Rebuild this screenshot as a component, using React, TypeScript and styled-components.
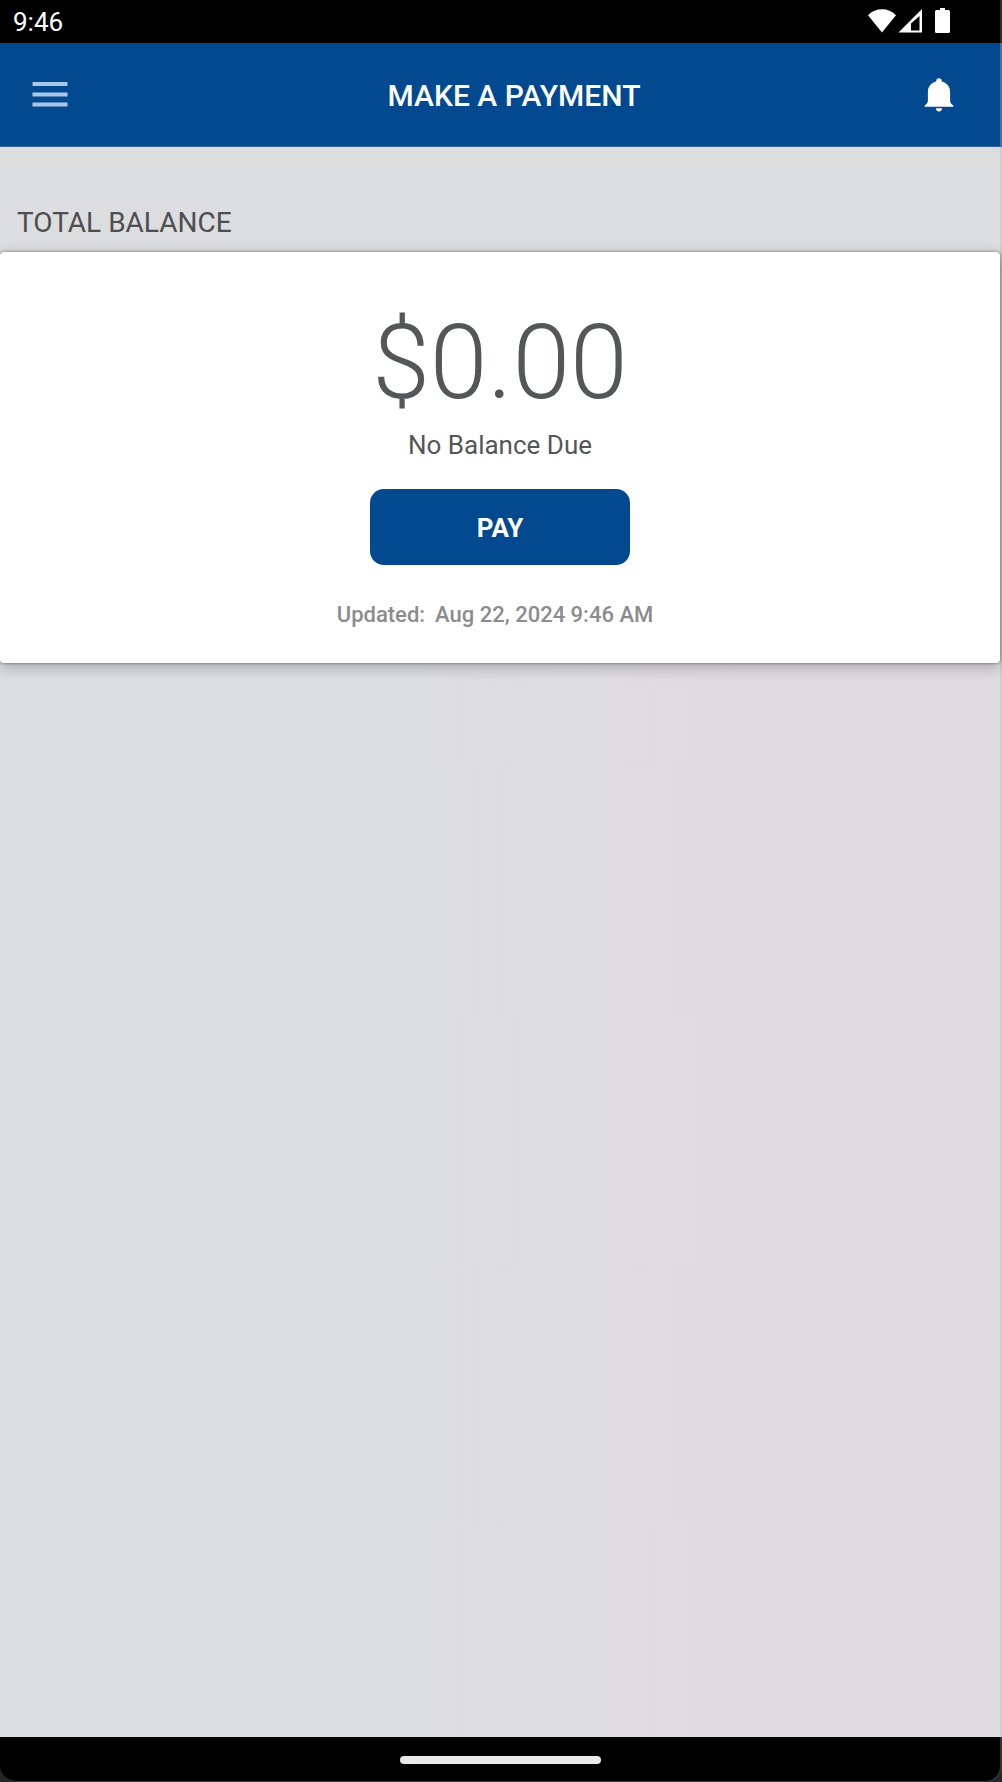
import React from 'react';
import styled, { createGlobalStyle } from 'styled-components';

const colors = {
  brand: '#024990',
  page: '#dcdddf',
  ink: '#555658',
  muted: '#8c8c8e',
};

const GlobalStyle = createGlobalStyle`
  * { box-sizing: border-box; }
  body {
    margin: 0;
    background: #26262a;
    font-family: Roboto, "Liberation Sans", sans-serif;
  }
`;

const Screen = styled.div`
  display: flex;
  flex-direction: column;
  min-height: 100vh;
`;

const StatusBar = styled.div`
  display: flex;
  align-items: center;
  justify-content: space-between;
  height: 43px;
  padding: 0 50px 0 13px;
  border-right: 2px solid #2c2c2e;
  background: #000;
  color: #fff;
  font-size: 26px;
  line-height: 32px;
`;

const StatusIcons = styled.div`
  display: flex;
  align-items: center;
  height: 43px;
  padding-bottom: 2px;
`;

const Header = styled.header`
  display: grid;
  grid-template-columns: 128px 1fr 100px;
  align-items: center;
  height: 104px;
  background: ${colors.brand};
  border-right: 2px solid #47719f;
  border-bottom: 1px solid #2f649d;
`;

const Title = styled.h1`
  margin: 0;
  padding-top: 2px;
  color: #fff;
  font-size: 30px;
  font-weight: 500;
  line-height: 40px;
  text-align: center;
`;

const IconButton = styled.button<{ $side: 'start' | 'end' }>`
  display: flex;
  align-items: center;
  justify-self: ${({ $side }) => $side};
  height: 72px;
  margin: 0;
  padding: 0 ${({ $side }) => ($side === 'start' ? 32 : 46)}px;
  border: 0;
  background: transparent;
  cursor: pointer;
`;

const Content = styled.main`
  display: flex;
  flex: 1;
  flex-direction: column;
  border-right: 2px solid #cfcfd0;
  background: linear-gradient(90deg, ${colors.page} 0%, ${colors.page} 40%, #dedbdf 75%, #dedbdf 100%);
`;

const SectionTitle = styled.h2`
  margin: 0;
  padding: 60px 17px 13px;
  background: #dcddde;
  color: #4d4e50;
  font-size: 28px;
  font-weight: 400;
  line-height: 32px;
`;

const Card = styled.section`
  display: flex;
  flex-direction: column;
  align-items: center;
  padding: 51px 16px 32px;
  border-radius: 4px;
  background: #fff;
  box-shadow: 0 0 3px rgba(0, 0, 0, 0.5), 0 4px 14px rgba(0, 0, 0, 0.25);
`;

const Amount = styled.div`
  color: ${colors.ink};
  font-size: 104px;
  font-weight: 300;
  line-height: 120px;
`;

const BalanceNote = styled.div`
  margin: 2px 0 24px;
  color: ${colors.ink};
  font-size: 26px;
  line-height: 40px;
`;

const PayButton = styled.button`
  width: 260px;
  height: 76px;
  padding: 2px 0 0;
  border: 0;
  border-radius: 14px;
  background: ${colors.brand};
  color: #fff;
  font-family: inherit;
  font-size: 26px;
  font-weight: 700;
  line-height: 32px;
  cursor: pointer;
`;

const Updated = styled.div`
  margin-top: 34px;
  color: ${colors.muted};
  font-size: 22px;
  font-weight: 500;
  line-height: 32px;
`;

const UpdatedPart = styled.span`
  display: inline-block;
  margin-right: 10px;
`;

const NavBar = styled.div`
  display: flex;
  justify-content: center;
  height: 45px;
  padding-top: 19px;
  border: solid #333336;
  border-width: 0 2px 1px 0;
  border-radius: 0 0 16px 16px;
  background: #000;
`;

const HomeHandle = styled.div`
  width: 201px;
  height: 8px;
  border-radius: 4px;
  background: #ebe9eb;
`;

const WifiIcon = () => (
  <svg width="28" height="24" viewBox="0 0 28 24" fill="#fff" aria-hidden="true">
    <path d="M14 23.500 0 6.200C4 2.300 8.700 .3 14 .3s10 2 14 5.900z" />
  </svg>
);

const SignalIcon = () => (
  <svg width="26" height="24" viewBox="0 0 26 24" fill="#fff" aria-hidden="true">
    <path fillRule="evenodd" d="M2.500 23.500 26 0v23.500zM15 21.500h8.500V7L15 14.500z" />
  </svg>
);

const BatteryIcon = () => (
  <svg width="28" height="25" viewBox="0 0 28 25" fill="#fff" aria-hidden="true">
    <path d="M18 0h5v2h3.500q1.500 0 1.500 1.500v20q0 1.500-1.500 1.500h-12q-1.500 0-1.500-1.500v-20q0-1.500 1.500-1.500H18z" />
  </svg>
);

const MenuIcon = () => (
  <svg width="36" height="28" viewBox="0 0 36 28" fill="#a9c8e8" aria-hidden="true">
    <path d="M.5 1h35v4H.5zM.5 11.500h35v4H.5zM.5 21.500h35v4H.5z" />
  </svg>
);

const BellIcon = () => (
  <svg width="30" height="34" viewBox="0 0 30 34" fill="#fff" aria-hidden="true">
    <path d="M15 .2c-1.600 0-2.800 1.100-2.800 2.700v.7C7 4.800 3.900 9 3.900 14v8.300c0 1.900-.6 3.200-2 4.300L.7 27.700v1h28.600v-1l-1.200-1.100c-1.400-1.100-2-2.400-2-4.300V14c0-5-3.100-9.200-8.300-10.400v-.7C17.800 1.300 16.600.2 15 .2z" />
    <path d="M11.900 30.200h6.200c0 1.900-1.300 3.300-3.100 3.300s-3.100-1.400-3.100-3.300z" />
  </svg>
);

export default function App() {
  return (
    <>
      <GlobalStyle />
      <Screen>
        <StatusBar>
          <span>9:46</span>
          <StatusIcons>
            <WifiIcon />
            <SignalIcon />
            <BatteryIcon />
          </StatusIcons>
        </StatusBar>
        <Header>
          <IconButton type="button" $side="start" aria-label="Menu">
            <MenuIcon />
          </IconButton>
          <Title>MAKE A PAYMENT</Title>
          <IconButton type="button" $side="end" aria-label="Notifications">
            <BellIcon />
          </IconButton>
        </Header>
        <Content>
          <SectionTitle>TOTAL BALANCE</SectionTitle>
          <Card>
            <Amount>$0.00</Amount>
            <BalanceNote>No Balance Due</BalanceNote>
            <PayButton type="button">PAY</PayButton>
            <Updated>
              <UpdatedPart>Updated:</UpdatedPart>
              <UpdatedPart>Aug 22, 2024 9:46 AM</UpdatedPart>
            </Updated>
          </Card>
        </Content>
        <NavBar>
          <HomeHandle />
        </NavBar>
      </Screen>
    </>
  );
}
